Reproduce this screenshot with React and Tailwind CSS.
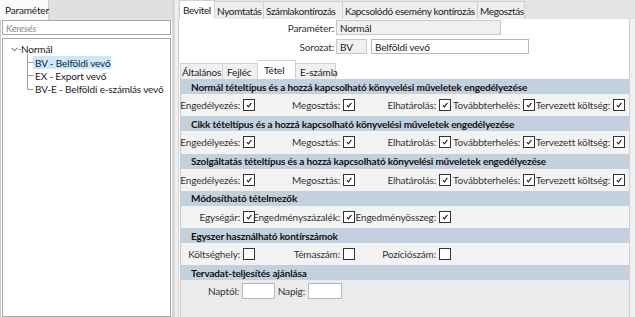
import React from "react";

const font = { fontFamily: 'Lato, "Open Sans", sans-serif' };

function Check({ checked = true }) {
  return (
    <div className="w-[12px] h-[12px] border border-[#333] bg-white flex items-center justify-center shrink-0">
      {checked && (
        <svg width="8" height="8" viewBox="0 0 8 8">
          <path d="M1.8 4.2 L3.4 5.8 L6.4 1.8" fill="none" stroke="#222" strokeWidth="1.1" />
        </svg>
      )}
    </div>
  );
}

function Cell({ w, label, checked }) {
  return (
    <div className={`${w} flex items-center justify-end gap-[3px] pr-[2px] shrink-0`}>
      <span className="whitespace-nowrap text-[#333]">{label}</span>
      <Check checked={checked} />
    </div>
  );
}

function Header({ children }) {
  return (
    <div className="h-[15px] bg-[#c3d0dd] flex items-center pl-[10px] font-bold text-[#111] whitespace-nowrap">
      {children}
    </div>
  );
}

function Row({ children }) {
  return <div className="h-[22.3px] bg-[#f3f3f3] flex items-center">{children}</div>;
}

function FiveRow() {
  return (
    <Row>
      <Cell w="w-[76px]" label="Engedélyezés:" />
      <Cell w="w-[100px]" label="Megosztás:" />
      <Cell w="w-[96px]" label="Elhatárolás:" />
      <Cell w="w-[84px]" label="Továbbterhelés:" />
      <Cell w="w-[90px]" label="Tervezett költség:" />
    </Row>
  );
}

export default function App() {
  return (
    <div className="w-[635px] h-[317px] flex bg-[#f0f0f0] overflow-hidden text-[10px] tracking-[-0.15px] text-[#1a1a1a] leading-none" style={font}>
      {/* Left panel */}
      <div className="w-[172px] flex flex-col shrink-0 bg-white">
        <div className="h-[20px] bg-[#e0e0e0] flex items-end">
          <div className="h-[20px] w-[49px] bg-[#fafafa] border-r border-[#d0d0d0] flex items-center pl-[5px] text-[#222]">
            Paraméter
          </div>
        </div>
        <div className="flex-1 flex flex-col border-l border-[#c8c8c8] pl-[1px] pr-[1px]">
          <div className="h-[15px] border border-[#a8a8a8] flex items-center pl-[3px] italic text-[#8a8a8a] bg-white">
            Keresés
          </div>
          <div className="mt-[3px] flex-1 border border-[#a8a8a8] bg-white relative">
            <div className="absolute left-[8px] top-[8px]">
              <svg width="7" height="5" viewBox="0 0 7 5">
                <path d="M0.5 0.8 L3.5 3.8 L6.5 0.8" fill="none" stroke="#444" strokeWidth="1" />
              </svg>
            </div>
            <div className="absolute left-[15px] top-[10px] w-[3px] h-[1px] bg-[#a0a0a0]" />
            <div className="absolute left-[24px] top-[15px] w-[1px] h-[36px] bg-[#a0a0a0]" />
            <div className="absolute left-[24px] top-[23px] w-[7px] h-[1px] bg-[#a0a0a0]" />
            <div className="absolute left-[24px] top-[36px] w-[7px] h-[1px] bg-[#a0a0a0]" />
            <div className="absolute left-[24px] top-[50px] w-[7px] h-[1px] bg-[#a0a0a0]" />
            <div className="pt-[4px] pl-[18px] flex flex-col">
              <div className="h-[12px] flex items-center text-[#222]">Normál</div>
              <div className="pl-[12px] flex flex-col mt-[1px]">
                <div className="h-[13px] w-[78px] bg-[#cce8ff] flex items-center pl-[2px] text-[#222] whitespace-nowrap">BV - Belföldi vevő</div>
                <div className="h-[13px] flex items-center pl-[2px] text-[#222] whitespace-nowrap">EX - Export vevő</div>
                <div className="h-[14px] flex items-center pl-[2px] text-[#222] whitespace-nowrap">BV-E - Belföldi e-számlás vevő</div>
              </div>
            </div>
          </div>
        </div>
      </div>

      {/* Splitter */}
      <div className="w-[6px] shrink-0 flex">
        <div className="w-[3px] bg-[#d6d6d6]" />
        <div className="w-[3px] bg-[#f0f0f0]" />
      </div>

      {/* Right panel */}
      <div className="flex-1 flex flex-col min-w-0">
        {/* Main tabs */}
        <div className="h-[19px] bg-[#e3e3e3] flex items-end shrink-0 whitespace-nowrap tracking-[-0.35px]">
          <div className="h-[19px] w-[36px] bg-white border-t border-l border-r border-[#d0d0d0] flex items-center pl-[3px] text-[#222] ml-[1px]">Bevitel</div>
          <div className="h-[18px] w-[49px] bg-[#eeeeee] border-r border-t border-[#d0d0d0] flex items-center pl-[2px] text-[#222]">Nyomtatás</div>
          <div className="h-[18px] w-[79px] bg-[#eeeeee] border-r border-t border-[#d0d0d0] flex items-center pl-[2px] text-[#222]">Számlakontírozás</div>
          <div className="h-[18px] w-[135px] bg-[#eeeeee] border-r border-t border-[#d0d0d0] flex items-center pl-[2px] text-[#222]">Kapcsolódó esemény kontírozás</div>
          <div className="h-[18px] w-[47px] bg-[#eeeeee] border-r border-t border-[#d0d0d0] flex items-center pl-[2px] text-[#222]">Megosztás</div>
        </div>
        <div className="flex-1 bg-white border-l border-r border-[#d0d0d0] mr-[5px] flex flex-col min-h-0">
          {/* Form */}
          <div className="flex items-center mt-[1px] h-[15px]">
            <div className="w-[157px] text-right pr-[2px] text-[#333]">Paraméter:</div>
            <div className="w-[165px] h-[15px] bg-[#f0f0f0] border border-[#c8c8c8] flex items-center pl-[3px] text-[#222]">Normál</div>
          </div>
          <div className="flex items-center mt-[4px] h-[15px]">
            <div className="w-[157px] text-right pr-[2px] text-[#333]">Sorozat:</div>
            <div className="w-[31px] h-[15px] bg-[#f0f0f0] border border-[#c8c8c8] flex items-center pl-[3px] text-[#222]">BV</div>
            <div className="ml-[4px] w-[158px] h-[15px] bg-white border border-[#b8b8b8] flex items-center pl-[3px] text-[#222]">Belföldi vevő</div>
          </div>
          {/* Inner tabs */}
          <div className="mt-[6px] h-[19px] flex items-end shrink-0 pl-[1px] whitespace-nowrap">
            <div className="h-[16px] w-[43px] bg-[#f0f0f0] border-t border-l border-r border-[#d0d0d0] flex items-center pl-[1px] text-[#222]">Általános</div>
            <div className="h-[16px] w-[35px] bg-[#f0f0f0] border-t border-r border-[#d0d0d0] flex items-center pl-[4px] text-[#222]">Fejléc</div>
            <div className="h-[19px] w-[38px] bg-white border-t border-r border-[#d0d0d0] flex items-center pl-[6px] text-[#222]">Tétel</div>
            <div className="h-[16px] w-[40px] bg-[#f0f0f0] border-t border-r border-[#d0d0d0] flex items-center pl-[4px] text-[#222]">E-számla</div>
          </div>
          {/* Inner content */}
          <div className="flex-1 ml-[1px] border-l border-[#c8c8c8] bg-[#ebebeb] flex flex-col">
            <Header>Normál tételtípus és a hozzá kapcsolható könyvelési műveletek engedélyezése</Header>
            <FiveRow />
            <Header>Cikk tételtípus és a hozzá kapcsolható könyvelési műveletek engedélyezése</Header>
            <FiveRow />
            <Header>Szolgáltatás tételtípus és a hozzá kapcsolható könyvelési műveletek engedélyezése</Header>
            <FiveRow />
            <Header>Módosítható tételmezők</Header>
            <Row>
              <Cell w="w-[76px]" label="Egységár:" />
              <Cell w="w-[100px]" label="Engedményszázalék:" />
              <Cell w="w-[96px]" label="Engedményösszeg:" />
            </Row>
            <Header>Egyszer használható kontírszámok</Header>
            <Row>
              <Cell w="w-[76px]" label="Költséghely:" checked={false} />
              <Cell w="w-[100px]" label="Témaszám:" checked={false} />
              <Cell w="w-[96px]" label="Pozíciószám:" checked={false} />
            </Row>
            <Header>Tervadat-teljesítés ajánlása</Header>
            <div className="h-[22px] flex items-center">
              <div className="w-[96px] flex items-center justify-end gap-[3px] pr-[2px] shrink-0">
                <span className="text-[#333]">Naptól:</span>
                <div className="w-[33px] h-[16px] bg-white border border-[#b8b8b8]" />
              </div>
              <div className="w-[67px] flex items-center justify-end gap-[3px] pr-[2px] shrink-0">
                <span className="text-[#333]">Napig:</span>
                <div className="w-[34px] h-[16px] bg-white border border-[#b8b8b8]" />
              </div>
            </div>
          </div>
        </div>
      </div>
    </div>
  );
}
